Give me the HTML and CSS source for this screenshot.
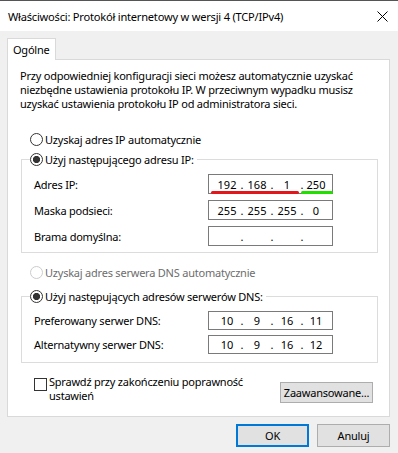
FILE: index.html
```html
<!DOCTYPE html>
<html lang="pl">
<head>
<meta charset="utf-8">
<title>Właściwości: Protokół internetowy w wersji 4 (TCP/IPv4)</title>
<link rel="stylesheet" href="styles.css">
</head>
<body>
<div class="window">
  <div class="titlebar">
    <span class="title">Właściwości: Protokół internetowy w wersji 4 (TCP/IPv4)</span>
    <svg class="close" width="11" height="11" viewBox="0 0 11 11"><path d="M0.5 0.5L10.5 10.5M10.5 0.5L0.5 10.5" stroke="#000" stroke-width="1" fill="none"/></svg>
  </div>
  <div class="dialog">
    <div class="tabs"><div class="tab">Ogólne</div></div>
    <div class="panel">
      <p class="intro">Przy odpowiedniej konfiguracji sieci możesz automatycznie uzyskać<br>niezbędne ustawienia protokołu IP. W przeciwnym wypadku musisz<br>uzyskać ustawienia protokołu IP od administratora sieci.</p>

      <div class="radio-row r-auto-ip"><span class="radio"></span><span>Uzyskaj adres IP automatycznie</span></div>

      <fieldset class="group g-ip">
        <legend><span class="radio-row"><span class="radio checked"></span><span>Użyj następującego adresu IP:</span></span></legend>
        <div class="rows rows-ip">
          <div class="field-row">
            <span class="label">Adres IP:</span>
            <div class="ipbox marked">
              <span class="oct">192</span><span class="dot">.</span><span class="oct">168</span><span class="dot">.</span><span class="oct">1</span><span class="dot">.</span><span class="oct last">250</span>
              <span class="mark red"></span><span class="mark green"></span>
            </div>
          </div>
          <div class="field-row">
            <span class="label">Maska podsieci:</span>
            <div class="ipbox">
              <span class="oct">255</span><span class="dot">.</span><span class="oct">255</span><span class="dot">.</span><span class="oct">255</span><span class="dot">.</span><span class="oct last">0</span>
            </div>
          </div>
          <div class="field-row">
            <span class="label">Brama domyślna:</span>
            <div class="ipbox">
              <span class="oct"></span><span class="dot">.</span><span class="oct"></span><span class="dot">.</span><span class="oct"></span><span class="dot">.</span><span class="oct last"></span>
            </div>
          </div>
        </div>
      </fieldset>

      <div class="radio-row r-auto-dns disabled"><span class="radio"></span><span>Uzyskaj adres serwera DNS automatycznie</span></div>

      <fieldset class="group g-dns">
        <legend><span class="radio-row"><span class="radio checked"></span><span>Użyj następujących adresów serwerów DNS:</span></span></legend>
        <div class="rows rows-dns">
          <div class="field-row">
            <span class="label">Preferowany serwer DNS:</span>
            <div class="ipbox">
              <span class="oct">10</span><span class="dot">.</span><span class="oct">9</span><span class="dot">.</span><span class="oct">16</span><span class="dot">.</span><span class="oct last">11</span>
            </div>
          </div>
          <div class="field-row">
            <span class="label">Alternatywny serwer DNS:</span>
            <div class="ipbox">
              <span class="oct">10</span><span class="dot">.</span><span class="oct">9</span><span class="dot">.</span><span class="oct">16</span><span class="dot">.</span><span class="oct last">12</span>
            </div>
          </div>
        </div>
      </fieldset>

      <div class="check-row">
        <span class="checkbox"></span>
        <span class="check-text">Sprawdź przy zakończeniu poprawność<br>ustawień</span>
        <button class="btn btn-adv" type="button">Zaawansowane...</button>
      </div>
    </div>
    <div class="buttons">
      <button class="btn btn-ok" type="button">OK</button>
      <button class="btn btn-cancel" type="button">Anuluj</button>
    </div>
  </div>
</div>
</body>
</html>
```
FILE: styles.css
```css
* { box-sizing: border-box; }
html, body { margin: 0; padding: 0; }
body {
  background: #f0f0f0;
  font-family: "Noto Sans", "Open Sans", sans-serif;
  font-size: 11px;
  letter-spacing: -0.22px;
  line-height: 13px;
  color: #000;
}
.window {
  width: 398px;
  height: 453px;
  overflow: hidden;
  border-top: 1px solid #555555;
  background: #f0f0f0;
}
.titlebar {
  height: 30px;
  background: #ffffff;
  display: flex;
  align-items: center;
  justify-content: space-between;
  padding-left: 8px;
  padding-right: 10px;
  font-size: 11.1px;
}
.close { display: block; }

.dialog { padding-top: 7px; }
.tabs { display: flex; padding-left: 7px; }
.tab {
  width: 49px;
  height: 22px;
  background: #fff;
  border: 1px solid #d9d9d9;
  border-bottom: none;
  margin-bottom: -1px;
  position: relative;
  z-index: 1;
  padding-left: 5px;
  padding-top: 4px;
}
.panel {
  margin-left: 7px;
  width: 383px;
  height: 358px;
  background: #fff;
  border: 1px solid #d9d9d9;
}
.intro {
  margin: 0;
  padding: 9px 0 0 12px;
  line-height: 14px;
  white-space: nowrap;
}
.radio-row {
  display: flex;
  align-items: center;
  height: 13px;
  white-space: nowrap;
}
.radio {
  width: 13px;
  height: 13px;
  border: 1px solid #333;
  border-radius: 50%;
  background: #fff;
  margin-right: 2px;
  flex: none;
}
.radio.checked {
  background: radial-gradient(circle, #333 0 3.3px, #fff 3.9px);
}
.r-auto-ip { margin: 22px 0 0 22px; }
.r-auto-dns { margin: 13px 0 0 22px; }
.disabled { color: #6d6d6d; }
.disabled .radio { border-color: #cccccc; }

.group {
  margin: 7px 0 0 13px;
  width: 357px;
  border: 1px solid #dcdcdc;
  padding: 0;
  min-inline-size: 0;
}
.g-dns { margin-top: 11px; }
.group legend {
  margin-left: 8px;
  padding: 0 3px 0 0;
}
.rows { display: flex; flex-direction: column; padding-left: 12px; }
.rows-ip { padding-top: 8px; padding-bottom: 6px; gap: 6px; }
.rows-dns { padding-top: 8px; padding-bottom: 8px; gap: 5px; }
.rows-ip .ipbox { height: 20px; }
.rows-dns .ipbox { height: 19px; }
.field-row { display: flex; align-items: center; }
.label { width: 174px; flex: none; }
.ipbox {
  width: 125px;
  border: 1px solid #7a7a7a;
  background: #fff;
  display: flex;
  align-items: center;
  padding-left: 5px;
  position: relative;
  letter-spacing: 0;
}
.oct { width: 26px; text-align: center; }
.oct.last { width: 24px; }
.dot { width: 4px; text-align: center; }
.mark {
  position: absolute;
  bottom: -1px;
  height: 3px;
  border-radius: 1.5px;
}
.mark.red { left: 2px; width: 88px; background: #e3161b; }
.mark.green { left: 92px; width: 32px; background: #21e000; }

.check-row {
  display: flex;
  align-items: flex-start;
  margin: 12px 0 0 26px;
}
.checkbox {
  width: 13px;
  height: 13px;
  border: 1px solid #333;
  background: #fff;
  margin-top: 3px;
  margin-right: 2px;
  flex: none;
}
.check-text { white-space: nowrap; line-height: 14px; }
.btn {
  font-family: inherit;
  font-size: 11px;
  letter-spacing: -0.22px;
  color: #000;
  background: #e1e1e1;
  border: 1px solid #adadad;
  padding: 0;
  margin: 0;
}
.btn-adv {
  margin-left: auto;
  margin-right: 16px;
  margin-top: 7px;
  width: 93px;
  height: 21px;
}
.buttons {
  display: flex;
  justify-content: flex-end;
  gap: 8px;
  padding-right: 8px;
  margin-top: 7px;
}
.btn-ok, .btn-cancel { width: 73px; height: 23px; }
.btn-ok { border: 2px solid #0078d7; }
```
